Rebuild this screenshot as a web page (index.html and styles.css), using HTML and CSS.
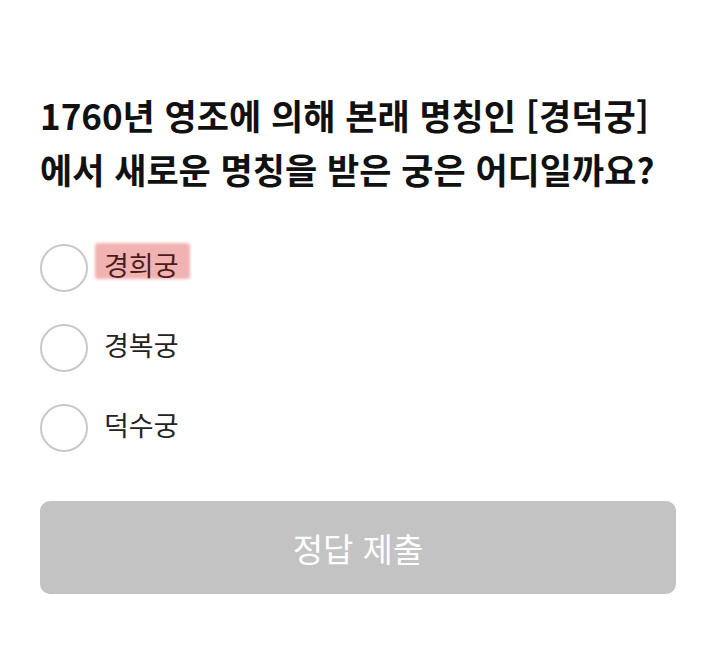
FILE: index.html
```
<!DOCTYPE html>
<html lang="ko">
<head>
<meta charset="utf-8">
<link rel="stylesheet" href="styles.css">
</head>
<body>
<main class="quiz">
  <h1 class="question">1760년 영조에 의해 본래 명칭인 [경덕궁]<br>에서 새로운 명칭을 받은 궁은 어디일까요?</h1>
  <ul class="options">
    <li class="option"><span class="radio"></span><span class="label highlight">경희궁</span></li>
    <li class="option"><span class="radio"></span><span class="label">경복궁</span></li>
    <li class="option"><span class="radio"></span><span class="label">덕수궁</span></li>
  </ul>
  <button class="submit" type="button">정답 제출</button>
</main>
</body>
</html>
```
FILE: styles.css
```
html, body {
  margin: 0;
  padding: 0;
  background: #ffffff;
}
body {
  font-family: "Noto Sans CJK KR", "Noto Sans", sans-serif;
  color: #111;
}
.quiz {
  padding: 88px 38px 0 40px;
}
.question {
  margin: 0;
  font-size: 35px;
  font-weight: 700;
  line-height: 54px;
  letter-spacing: 0;
  color: #111;
  white-space: nowrap;
}
.options {
  list-style: none;
  margin: 48px 0 0;
  padding: 0;
  display: flex;
  flex-direction: column;
  gap: 32px;
}
.option {
  display: flex;
  align-items: center;
  height: 48px;
}
.radio {
  width: 44px;
  height: 44px;
  border: 2px solid #c8c8c8;
  border-radius: 50%;
  flex: none;
}
.label {
  margin-left: 16px;
  font-size: 27px;
  line-height: 32px;
  padding-bottom: 6px;
  color: #222;
}
.highlight {
  position: relative;
  isolation: isolate;
  color: #4b1c1c;
}
.highlight::before {
  content: "";
  position: absolute;
  left: -9px;
  right: -11px;
  top: -6px;
  bottom: 8px;
  background: #f1b2b2;
  border-radius: 3px;
  filter: blur(1.5px);
  z-index: -1;
}
.submit {
  display: block;
  width: 636px;
  height: 93px;
  margin-top: 49px;
  border: none;
  border-radius: 10px;
  background: #c3c3c3;
  color: #fff;
  font-family: inherit;
  font-size: 33px;
}
```
